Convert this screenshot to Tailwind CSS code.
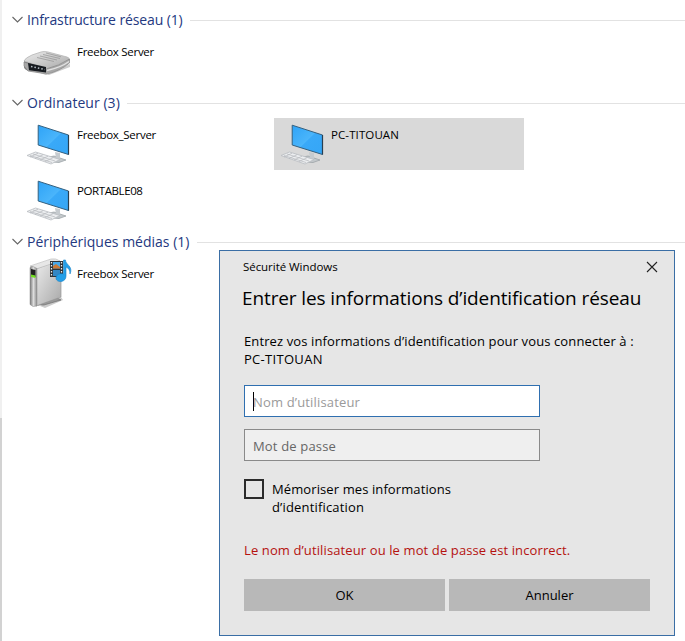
<!DOCTYPE html>
<html lang="fr">
<head>
<meta charset="utf-8">
<title>Réseau</title>
<script src="https://cdn.jsdelivr.net/npm/@tailwindcss/browser@4"></script>
</head>
<body class="relative flex h-[641px] w-[685px] overflow-hidden bg-white font-['Open_Sans','Noto_Sans',sans-serif] text-black">
<svg class="absolute h-0 w-0">
  <defs>
    <linearGradient id="screen" x1="0" y1="0" x2="1" y2="1"><stop offset="0" stop-color="#2ea3f7"/><stop offset=".5" stop-color="#4ab5fb"/><stop offset=".52" stop-color="#39a9f8"/><stop offset="1" stop-color="#35a6f6"/></linearGradient>
    <linearGradient id="metal" x1="0" y1="0" x2="1" y2="1"><stop offset="0" stop-color="#ececec"/><stop offset="1" stop-color="#a8a8a8"/></linearGradient>
    <linearGradient id="edge" x1="0" y1="0" x2="1" y2="0"><stop offset="0" stop-color="#777"/><stop offset=".5" stop-color="#ddd"/><stop offset="1" stop-color="#8c8c8c"/></linearGradient>
    <symbol id="pc" viewBox="0 0 50 52">
      <path d="M18 40l9-2 12 4-7 2.500-9-.7-5-2z" fill="#c3c8cb" stroke="#969da2" stroke-width=".7"/>
      <path d="M28 34l5 1v6h-4z" fill="#c6cbcf"/>
      <path d="M11.200 7.200L41.500 17v19.500L11.200 27z" fill="url(#screen)" stroke="#34607f" stroke-width="1"/>
      <path d="M41.500 17v19.500" stroke="#2a3f50" stroke-width="1.200"/>
      <path d="M0 37.500L8.500 34 33 41.500 24 46z" fill="#eceef0" stroke="#b9bdc1" stroke-width=".8"/>
      <path d="M3 37.500l22 7M6 36l22 7M3 39l8-3.800M8 40.500l8-3.800M13 42l8-3.800M18 43.500l8-3.800" fill="none" stroke="#b4b8bc" stroke-width=".7"/>
    </symbol>
  </defs>
</svg>

<aside class="flex w-[2px] shrink-0 flex-col"><div class="h-[418px] bg-[#f0f0f0]"></div><div class="flex-1 bg-[#d2d2d2]"></div></aside>
<main class="min-w-0 flex-1 pt-[5px]">
  <section class="h-[83px]">
    <h2 class="flex h-[30px] items-center pl-[10px] text-[14px] text-[#24397f]">
      <svg class="mr-[4px] mb-px h-[7px] w-[11px] shrink-0" viewBox="0 0 11 7" fill="none" stroke="#666" stroke-width="1.100"><path d="M.5 1l5 5 5-5"/></svg>
      <span class="pb-[2px] tracking-[-0.12px] whitespace-nowrap">Infrastructure réseau (1)</span>
      <span class="ml-auto h-px w-[495px] bg-[#e2e2e2]"></span>
    </h2>
    <div class="ml-[18px] flex h-[52px] w-[250px] items-start">
      <svg class="h-[52px] w-[57px]" viewBox="0 0 57 52">
        <path d="M8 34l18 6 24-11v3L29 40z" fill="#ccc"/>
        <path d="M4 26l18 5.500v6L8 35.500q-4-1-4-4z" fill="#777"/>
        <path d="M4 26Q5 23 12 20l9-3q3-1 7 0l19 5q3 1 2 3L29 34z" fill="url(#metal)" stroke="#b5b5b5" stroke-width=".8"/>
        <path d="M26 34q13-3 23.500-10v4Q40 36 27 39L8 36l-4-5v-4z" fill="#a8a8a8" stroke="#858585" stroke-width=".7"/>
        <path d="M27 35.500q14-3 22-9" stroke="#e2e2e2" stroke-width="1.300" fill="none"/>
        <path d="M8 28l18 4v5.500l-17-2.300z" fill="#171b20"/>
        <path d="M11 31.500l14 3" stroke="#b8c1c7" stroke-width="1.500" stroke-dasharray="1.500 2"/>
        <path d="M20 21l17 4M23 19.500l17 4M26 18l15 3.800M17 22.500l17 4" stroke="#999" stroke-width=".8"/>
      </svg>
      <span class="mt-[8px] text-[11.500px] leading-[18px] tracking-[-0.28px] whitespace-nowrap">Freebox Server</span>
    </div>
  </section>

  <section class="h-[138px]">
    <h2 class="flex h-[30px] items-center pl-[10px] text-[14px] text-[#24397f]">
      <svg class="mr-[4px] mb-px h-[7px] w-[11px] shrink-0" viewBox="0 0 11 7" fill="none" stroke="#666" stroke-width="1.100"><path d="M.5 1l5 5 5-5"/></svg>
      <span class="pb-[2px] tracking-[0.05px] whitespace-nowrap">Ordinateur (3)</span>
      <span class="ml-auto h-px w-[558px] bg-[#e2e2e2]"></span>
    </h2>
    <div class="ml-[18px] grid grid-cols-[250px_250px] gap-1">
      <div class="flex h-[52px] items-start pl-[7px]">
        <svg class="h-[52px] w-[50px]"><use href="#pc"/></svg>
        <span class="mt-[8px] text-[11.500px] leading-[18px] tracking-[-0.28px] whitespace-nowrap">Freebox_Server</span>
      </div>
      <div class="flex h-[52px] items-start bg-[#d9d9d9] pl-[7px]">
        <svg class="h-[52px] w-[50px]"><use href="#pc"/></svg>
        <span class="mt-[8px] text-[11.500px] leading-[18px] tracking-[0.1px] whitespace-nowrap">PC-TITOUAN</span>
      </div>
      <div class="flex h-[52px] items-start pl-[7px]">
        <svg class="h-[52px] w-[50px]"><use href="#pc"/></svg>
        <span class="mt-[8px] text-[11.500px] leading-[18px] tracking-[-0.4px] whitespace-nowrap">PORTABLE08</span>
      </div>
    </div>
  </section>

  <section class="pt-px">
    <h2 class="flex h-[30px] items-center pl-[10px] text-[14px] text-[#24397f]">
      <svg class="mr-[4px] mb-px h-[7px] w-[11px] shrink-0" viewBox="0 0 11 7" fill="none" stroke="#666" stroke-width="1.100"><path d="M.5 1l5 5 5-5"/></svg>
      <span class="pb-[2px] whitespace-nowrap">Périphériques médias (1)</span>
      <span class="ml-auto h-px w-[488px] bg-[#e2e2e2]"></span>
    </h2>
    <div class="ml-[18px] flex h-[52px] w-[250px] items-start">
      <svg class="h-[52px] w-[57px]" viewBox="0 0 57 52">
        <path d="M20 49l21-9 2 3-18 8z" fill="#ccc"/>
        <path d="M18 48l19-7 4 2-17 5z" fill="#999" stroke="#666" stroke-width=".6"/>
        <path d="M16 12l21-8q4-1 4 2v34l-25 9z" fill="url(#metal)" stroke="#999" stroke-width=".7"/>
        <path d="M10 9l21-7q5-1 9 2l-24 8z" fill="#e7e7e7" stroke="#bbb" stroke-width=".6"/>
        <path d="M10 11q0-2 3-1.500l4 2V49l-4 .5-3-2z" fill="url(#edge)" stroke="#888" stroke-width=".5"/>
        <path d="M11 12l4.500 1v7L11 19z" fill="#222"/>
        <path d="M11 17.500l4.500 1v2.500L11 20z" fill="#72df21"/>
        <path d="M30 4h13v16H30z" fill="#2e3338"/>
        <path d="M33 5h7v6.500h-7z" fill="#49a8e8"/><path d="M33 9l3-2 4 3v1.500h-7z" fill="#cc7a35"/><path d="M33 13h7v6h-7z" fill="#3487c4"/>
        <path d="M31.500 5v15M41.500 5v15" stroke="#eee" stroke-width="1.300" stroke-dasharray="1.500 1.500"/>
        <path d="M43.500 3h2c0 5 8 6 4.500 14 0-4-1.500-6-4-7v9c0 7-10 7-10 2 0-4 5-5 7.500-4z" fill="#249fe8" stroke="#1482c8" stroke-width=".6"/>
      </svg>
      <span class="mt-[8px] text-[11.500px] leading-[18px] tracking-[-0.28px] whitespace-nowrap">Freebox Server</span>
    </div>
  </section>
</main>

<div role="dialog" class="absolute top-[250px] left-[219px] flex h-[386px] w-[456px] flex-col border border-[#3a6ea5] bg-[#e6e6e6] px-[24px]">
  <div class="-ml-px flex h-[32px] items-center justify-between text-[11.500px]">
    <span class="tracking-[-0.05px]">Sécurité Windows</span>
    <svg class="mr-[-8px] h-[12px] w-[12px]" viewBox="0 0 12 12" stroke="#222" stroke-width="1.100"><path d="M1 1l10 10M11 1L1 11"/></svg>
  </div>
  <h1 class="-ml-[2px] h-[30px] text-[19px] leading-[30px] tracking-[-0.11px] whitespace-nowrap">Entrer les informations d’identification réseau</h1>
  <p class="mt-[19px] text-[13px] leading-[18px] tracking-[0.115px] whitespace-nowrap">Entrez vos informations d’identification pour vous connecter à :<br><span class="tracking-[0.3px]">PC-TITOUAN</span></p>
  <div class="mt-[17px] flex h-[32px] w-[296px] items-center border border-[#2f6fb0] bg-white pl-[8px] text-[13px] tracking-[0.16px] text-[#9a9a9a]"><i class="h-[19px] w-px bg-black"></i><span class="-ml-px pt-[3px]">Nom d’utilisateur</span></div>
  <div class="mt-[12px] flex h-[32px] w-[296px] items-center border border-[#8a8a8a] bg-[#efefef] pl-[8px] text-[13px] tracking-[0.16px] text-[#666]"><span class="pt-[3px]">Mot de passe</span></div>
  <div class="mt-[18px] flex text-[13px] leading-[18px] tracking-[0.1px]">
    <i class="mr-[8px] h-[20px] w-[20px] border-2 border-[#2b2b2b]"></i>
    <span class="mt-px">Mémoriser mes informations<br><span class="tracking-[0.17px]">d’identification</span></span>
  </div>
  <p class="mt-[25px] text-[13px] leading-[18px] tracking-[0.115px] whitespace-nowrap text-[#b5120f]">Le nom d’utilisateur ou le mot de passe est incorrect.</p>
  <div class="mt-[20px] flex gap-1 text-[13px]">
    <button class="h-[32px] w-[201px] bg-[#b8b8b8] pt-[2px]">OK</button>
    <button class="h-[32px] w-[201px] bg-[#b8b8b8] pt-[2px]">Annuler</button>
  </div>
</div>
</body>
</html>
